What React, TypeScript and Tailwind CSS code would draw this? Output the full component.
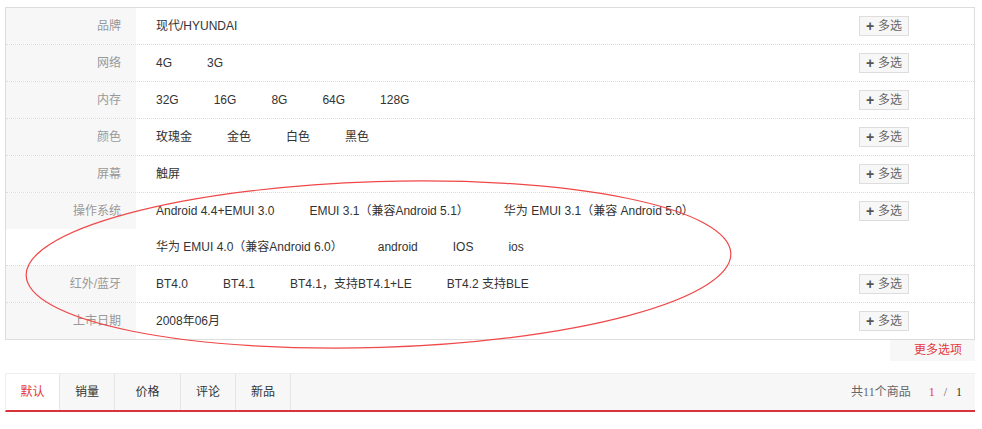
import React from 'react'

const font = 'font-["Liberation_Sans","Noto_Sans_CJK_SC",sans-serif]'

const rows: { label: string; items: string[] }[] = [
  { label: '品牌', items: ['现代/HYUNDAI'] },
  { label: '网络', items: ['4G', '3G'] },
  { label: '内存', items: ['32G', '16G', '8G', '64G', '128G'] },
  { label: '颜色', items: ['玫瑰金', '金色', '白色', '黑色'] },
  { label: '屏幕', items: ['触屏'] },
  {
    label: '操作系统',
    items: [
      'Android 4.4+EMUI 3.0',
      'EMUI 3.1（兼容Android 5.1）',
      '华为 EMUI 3.1（兼容 Android 5.0）',
      '华为 EMUI 4.0（兼容Android 6.0）',
      'android',
      'IOS',
      'ios'
    ]
  },
  { label: '红外/蓝牙', items: ['BT4.0', 'BT4.1', 'BT4.1，支持BT4.1+LE', 'BT4.2 支持BLE'] },
  { label: '上市日期', items: ['2008年06月'] }
]

const tabs = [
  { name: '默认', w: 'w-[54px]', active: true },
  { name: '销量', w: 'w-[55px]' },
  { name: '价格', w: 'w-[66px]' },
  { name: '评论', w: 'w-[55px]' },
  { name: '新品', w: 'w-[55px]' }
]

function FilterRow({ label, items, last }: { label: string; items: string[]; last: boolean }) {
  return (
    <div className={`flex ${last ? '' : 'border-b border-dotted border-[#dcdcdc]'}`}>
      <div className="w-[130px] h-[36px] shrink-0 bg-[#f7f7f7] text-right pr-[15px] leading-[36px] text-[#999]">
        {label}
      </div>
      <div className="flex-1 flex flex-wrap pl-[20px] pr-[10px]">
        {items.map(item => (
          <span key={item} className="leading-[36px] mr-[35px] whitespace-nowrap text-[#333]">
            {item}
          </span>
        ))}
      </div>
      <div className="w-[115px] shrink-0 pt-[8px]">
        <button className="w-[50px] h-[20px] border border-[#ddd] bg-[#f7f7f7] text-[#666] flex items-center justify-center gap-[4px] leading-none">
          <span className="font-bold text-[#555] text-[14px] leading-none">+</span>
          <span>多选</span>
        </button>
      </div>
    </div>
  )
}

export default function App() {
  return (
    <div className={`relative w-[982px] h-[429px] bg-white text-[12px] ${font}`}>
      <div className="pt-[7px] pl-[5px] pr-[7px]">
        <div className="border border-[#ddd]">
          {rows.map((r, i) => (
            <FilterRow key={r.label} label={r.label} items={r.items} last={i === rows.length - 1} />
          ))}
        </div>

        <div className="flex justify-end">
          <div className="w-[85px] h-[21px] bg-[#f7f7f7] text-[#e4393c] text-right pr-[13px] leading-[21px]">
            更多选项
          </div>
        </div>

        <div className="mt-[12px] h-[39px] flex bg-[#f7f7f7] border-t border-l border-[#eee] border-b-2 border-b-[#d9333a]">
          {tabs.map(t => (
            <div
              key={t.name}
              className={`${t.w} h-full flex items-center justify-center border-r border-[#e5e5e5] ${
                t.active ? 'bg-white text-[#e4393c]' : 'text-[#333]'
              }`}
            >
              {t.name}
            </div>
          ))}
          <div className="flex-1" />
          <div className="flex items-center pr-[13px] text-[#666]">
            <span className="mr-[18px]">
              共<span className='font-["Liberation_Serif",serif]'>11</span>个商品
            </span>
            <span className='font-["Liberation_Serif",serif] text-[#e4393c]'>1</span>
            <span className='font-["Liberation_Serif",serif] mx-[9px] text-[#666]'>/</span>
            <span className='font-["Liberation_Serif",serif] text-[#333]'>1</span>
          </div>
        </div>
      </div>

      <svg className="absolute left-0 top-0 pointer-events-none" width="982" height="429">
        <ellipse
          cx="378.5"
          cy="264.5"
          rx="352.5"
          ry="83"
          transform="rotate(-1.8 378.5 264.5)"
          fill="none"
          stroke="#f04848"
          strokeWidth="1.2"
        />
      </svg>
    </div>
  )
}
